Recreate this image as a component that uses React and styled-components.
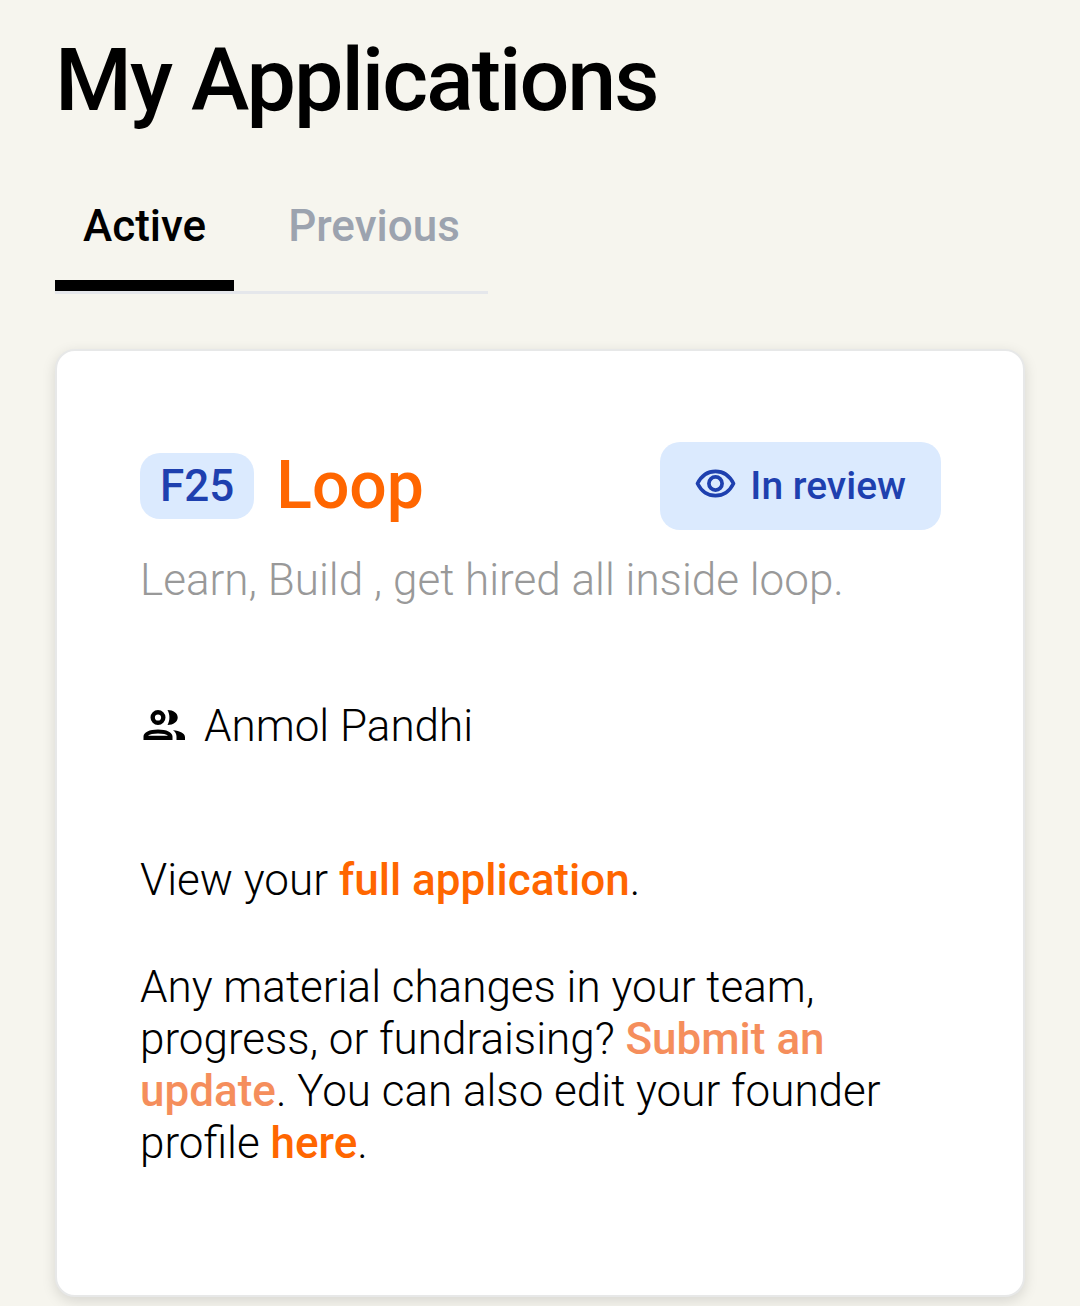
import React from 'react';
import styled, {createGlobalStyle} from "styled-components";

const GlobalStyle = createGlobalStyle`
  * {
    box-sizing: border-box;
  }
  body {
    margin: 0;
    background: #f6f5ee;
    color: #000;
    font-family: Roboto, sans-serif;
    font-weight: 300;
    font-size: 44px;
    line-height: 52px;
  }
`;

const Page = styled.main`
  padding: 32px 55px 10px;
`;

const Title = styled.h1`
  margin: 0;
  font-size: 88px;
  line-height: 96px;
  font-weight: 500;
  letter-spacing: -2px;
`;

const Tabs = styled.div`
  display: flex;
  gap: 26px;
  width: fit-content;
  margin-top: 60px;
  border-bottom: 3px solid #e5e7eb;
`;

const Tab = styled.button`
  padding: 12px 28px 28px;
  border: none;
  border-bottom: 11px solid ${({$active}) => ($active ? '#000' : 'transparent')};
  background: none;
  color: ${({$active}) => ($active ? '#000' : '#9ca3af')};
  font: 500 44px/52px Roboto, sans-serif;
`;

const Card = styled.section`
  margin-top: 55px;
  padding: 91px 82px 126px 83px;
  border: 2px solid #e7e8e8;
  border-radius: 20px;
  background: #fff;
  box-shadow: 0 4px 14px rgba(0, 0, 0, 0.13);
`;

const CardHeader = styled.header`
  display: flex;
  align-items: center;
  justify-content: space-between;
`;

const Heading = styled.div`
  display: flex;
  align-items: center;
  gap: 22px;
`;

const Batch = styled.span`
  padding: 7px 20px;
  border-radius: 20px;
  background: #dbeafe;
  color: #1e40af;
  font-weight: 500;
`;

const Company = styled.h2`
  margin: 0;
  color: #f60;
  font-size: 66px;
  line-height: 72px;
  font-weight: 500;
`;

const Status = styled.div`
  display: flex;
  align-items: center;
  gap: 14px;
  padding: 18px 35px;
  border-radius: 20px;
  background: #dbeafe;
  color: #1e40af;
  font-size: 39px;
  font-weight: 500;
`;

const Tagline = styled.p`
  margin: 24px 0 0;
  color: #999;
`;

const Founders = styled.div`
  display: flex;
  align-items: center;
  gap: 18px;
  margin-top: 94px;
`;

const Text = styled.p`
  margin: ${({$top}) => $top}px 0 0;
`;

const Link = styled.a`
  color: ${({$muted}) => ($muted ? '#f58e5c' : '#f60')};
  font-weight: 500;
  text-decoration: none;
`;

const EyeIcon = () => (
    <svg width="41" height="34" viewBox="0 0 41 34" fill="none" stroke="currentColor" strokeWidth="3.7" strokeLinejoin="round" aria-hidden="true">
        <path d="M2.500 14.500C6.500 6.500 13 2.300 20.500 2.300S34.500 6.500 38.500 14.500C34.500 22.500 28 26.700 20.500 26.700S6.500 22.500 2.500 14.500Z"/>
        <circle cx="20.500" cy="14.500" r="6.600"/>
    </svg>
);

const PeopleIcon = () => (
    <svg width="46" height="34" viewBox="0 0 46 34" fill="currentColor" aria-hidden="true">
        <path fillRule="evenodd" d="M18 1a7.500 7.500 0 1 1 0 15a7.500 7.500 0 1 1 0-15zM18 5.400a3.100 3.100 0 1 0 0 6.200a3.100 3.100 0 1 0 0-6.200z"/>
        <path d="M27.500 1c6 0 10.200 3.300 10.200 7.500S33.500 16 27.500 16c2.600-4.600 2.600-10.400 0-15z"/>
        <path fillRule="evenodd" d="M3.500 31v-3.500c0-4.200 6-7 14.500-7s14.500 2.800 14.500 7V31zM8 26.800h20c-1.500-1.500-5.500-2.300-10-2.300s-8.500.8-10 2.300z"/>
        <path d="M33 21.200c7 .6 12 3.100 12 7V31h-8.500v-3.500c0-2.600-1.200-4.700-3.500-6.300z"/>
    </svg>
);

const App = () => {
    return (
        <Page>
            <GlobalStyle/>
            <Title>My Applications</Title>
            <Tabs role="tablist">
                <Tab type="button" role="tab" aria-selected="true" $active>Active</Tab>
                <Tab type="button" role="tab" aria-selected="false">Previous</Tab>
            </Tabs>
            <Card>
                <CardHeader>
                    <Heading>
                        <Batch>F25</Batch>
                        <Company>Loop</Company>
                    </Heading>
                    <Status><EyeIcon/>In review</Status>
                </CardHeader>
                <Tagline>Learn, Build , get hired all inside loop.</Tagline>
                <Founders><PeopleIcon/>Anmol Pandhi</Founders>
                <Text $top={102}>View your <Link href="#application">full application</Link>.</Text>
                <Text $top={55}>
                    Any material changes in your team, progress, or fundraising?{' '}
                    <Link href="#update" $muted>Submit an update</Link>. You can also edit your founder
                    profile <Link href="#profile">here</Link>.
                </Text>
            </Card>
        </Page>
    );
};

export default App;
